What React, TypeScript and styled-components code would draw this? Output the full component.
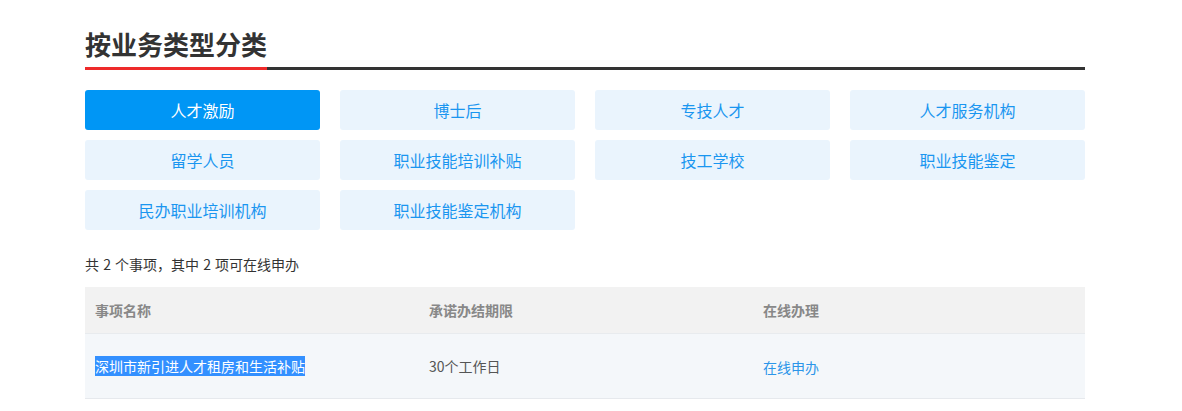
import React from "react";
import styled, { createGlobalStyle } from "styled-components";

const Global = createGlobalStyle`
  html, body { margin: 0; padding: 0; background: #fff; }
  body { font-family: "Noto Sans CJK SC", "Noto Sans", sans-serif; color: #333; }
`;

const Page = styled.div`
  width: 1000px;
  margin-left: 85px;
  padding-top: 24px;
`;

const TitleBar = styled.div`
  display: flex;
  border-bottom: 3px solid #333;
`;

const Title = styled.h2`
  margin: 0 0 -3px 0;
  font-size: 26px;
  line-height: 40px;
  font-weight: 700;
  color: #333;
  padding-bottom: 3px;
  border-bottom: 3px solid #ee2a2a;
`;

const Grid = styled.div`
  display: grid;
  grid-template-columns: repeat(4, 235px);
  column-gap: 20px;
  row-gap: 10px;
  margin-top: 20px;
`;

const Cat = styled.button<{ $active?: boolean }>`
  height: 40px;
  border: none;
  border-radius: 3px;
  font-family: inherit;
  font-size: 16px;
  cursor: pointer;
  background: ${(p) => (p.$active ? "#0096f5" : "#eaf4fd")};
  color: ${(p) => (p.$active ? "#fff" : "#1a96f0")};
`;

const Summary = styled.div`
  margin-top: 24px;
  font-size: 14px;
  line-height: 20px;
  color: #333;
  white-space: pre;
  word-spacing: 1px;
`;

const Table = styled.div`
  margin-top: 13px;
`;

const Row = styled.div<{ $head?: boolean }>`
  display: grid;
  grid-template-columns: 334px 334px 332px;
  align-items: center;
  height: ${(p) => (p.$head ? "46px" : "64px")};
  background: ${(p) => (p.$head ? "#f2f2f2" : "#f4f7fa")};
  border-bottom: 1px solid ${(p) => (p.$head ? "#e8ebee" : "#e6e9ed")};
`;

const Cell = styled.div<{ $head?: boolean; $link?: boolean }>`
  padding-left: 10px;
  font-size: 14px;
  font-weight: ${(p) => (p.$head ? 700 : 400)};
  color: ${(p) => (p.$head ? "#888" : p.$link ? "#2b95e9" : "#555")};
  margin-top: ${(p) => (p.$link ? "1px" : "0")};
`;

const Selected = styled.span`
  background: #3390ff;
  color: #fff;
`;

const cats = [
  "人才激励",
  "博士后",
  "专技人才",
  "人才服务机构",
  "留学人员",
  "职业技能培训补贴",
  "技工学校",
  "职业技能鉴定",
  "民办职业培训机构",
  "职业技能鉴定机构",
];

export default function App() {
  return (
    <>
      <Global />
      <Page>
        <TitleBar>
          <Title>按业务类型分类</Title>
        </TitleBar>
        <Grid>
          {cats.map((c, i) => (
            <Cat key={c} $active={i === 0}>
              {c}
            </Cat>
          ))}
        </Grid>
        <Summary>共 2 个事项，其中 2 项可在线申办</Summary>
        <Table>
          <Row $head>
            <Cell $head>事项名称</Cell>
            <Cell $head>承诺办结期限</Cell>
            <Cell $head>在线办理</Cell>
          </Row>
          <Row>
            <Cell>
              <Selected>深圳市新引进人才租房和生活补贴</Selected>
            </Cell>
            <Cell>30个工作日</Cell>
            <Cell $link>在线申办</Cell>
          </Row>
        </Table>
      </Page>
    </>
  );
}
